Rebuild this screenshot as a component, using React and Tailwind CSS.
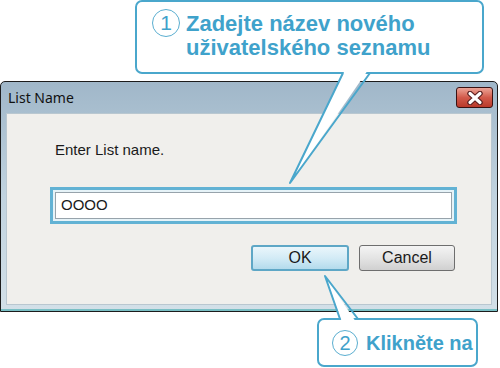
import React from "react";

const CALLOUT = "#4aa7cc";

const Circle = ({ n, size }) => (
  <div
    className={`flex items-center justify-center rounded-full border-[1.5px] border-[#5aaed0] bg-white text-[#3fa2cb] font-normal shrink-0 ${
      size === "lg" ? "w-[28px] h-[28px] text-[21px]" : "w-[26px] h-[26px] text-[20px]"
    }`}
  >
    {n}
  </div>
);

const CloseButton = () => (
  <div className="w-[37px] h-[21px] rounded-[3px] border border-[#3a1212] bg-gradient-to-b from-[#eba396] via-[#d25a4b] to-[#b9392a] flex items-center justify-center">
    <svg width="18" height="14" viewBox="0 0 18 14">
      <path d="M4 2.5 L14 11.5 M14 2.5 L4 11.5" stroke="#5a2020" strokeWidth="5.5" strokeLinecap="round" />
      <path d="M4 2.5 L14 11.5 M14 2.5 L4 11.5" stroke="#ffffff" strokeWidth="3.2" strokeLinecap="round" />
    </svg>
  </div>
);

export default function App() {
  return (
    <div className="relative w-[500px] h-[368px] bg-white overflow-hidden font-['Liberation_Sans',Arial,sans-serif]">
      {/* dialog window */}
      <div className="mt-[81px] w-[498px] h-[231px] flex flex-col border border-[#1c1c1c] rounded-t-[5px] bg-gradient-to-b from-[#a0b7c9] via-[#c1d3df] to-[#d3e0e8]">
        <div className="h-[31px] flex items-center justify-between pl-[7px] pr-[4px]">
          <span className="text-[14px] text-[#111] font-['Noto_Sans','DejaVu_Sans',sans-serif]">List Name</span>
          <CloseButton />
        </div>
        <div className="flex-1 mx-[5px] bg-[#f0efec] border border-[#b9c7d0] flex flex-col">
          <div className="ml-[48px] mt-[27px] text-[15px] leading-[18px] text-[#1a1a1a]">Enter List name.</div>
          <div className="ml-[43px] mt-[28px] w-[407px] h-[37px] border-[3px] border-[#62b2d4] bg-[#e6f3f8] p-[2px]">
            <div className="h-full bg-white border border-[#97a3ab] flex items-center pl-[5px] text-[15px] text-[#1a1a1a]">
              OOOO
            </div>
          </div>
          <div className="mt-[21px] flex justify-end gap-[10px] pr-[36px]">
            <div className="w-[98px] h-[26px] rounded-[3px] border-2 border-[#5ea7c6] bg-gradient-to-b from-[#eaf6fb] via-[#d3ebf6] to-[#b3dbec] flex items-center justify-center text-[16px] text-[#1a1a1a]">
              OK
            </div>
            <div className="w-[96px] h-[26px] rounded-[3px] border border-[#6e6e6e] bg-gradient-to-b from-[#f4f4f4] via-[#e4e4e4] to-[#d0d0d0] flex items-center justify-center text-[16px] text-[#1a1a1a]">
              Cancel
            </div>
          </div>
        </div>
        <div className="h-[4px]" />
        <div className="h-[2px] bg-[#79bfc4]" />
      </div>

      {/* callout 1 */}
      <div className="absolute left-[135px] top-0 w-[349px] h-[74px] rounded-[7px] border-2 border-[#4aa7cc] bg-white flex items-start pl-[15px] pt-[7px]">
        <Circle n="1" size="lg" />
        <div className="ml-[6px] mt-[3px] text-[22px] leading-[24px] font-bold text-[#3fa2cb]">
          <div>Zadejte název nového</div>
          <div>uživatelského seznamu</div>
        </div>
      </div>

      {/* callout 2 */}
      <div className="absolute left-[317px] top-[318px] w-[161px] h-[49px] rounded-[7px] border-2 border-[#4aa7cc] bg-white flex items-center pl-[13px]">
        <Circle n="2" />
        <span className="ml-[8px] text-[20px] font-bold text-[#3fa2cb]">Klikněte na</span>
      </div>

      {/* pointers */}
      <svg className="absolute inset-0 pointer-events-none" width="500" height="368" viewBox="0 0 500 368">
        <polygon points="345,70 368,70 290,183" fill="#ffffff" />
        <polyline points="343,73 290,183 370,73" fill="none" stroke={CALLOUT} strokeWidth="2" strokeLinejoin="round" />
        <polygon points="342,322 356,322 325,276" fill="#ffffff" />
        <polyline points="340,319 325,276 358,319" fill="none" stroke={CALLOUT} strokeWidth="2" strokeLinejoin="round" />
      </svg>
    </div>
  );
}
